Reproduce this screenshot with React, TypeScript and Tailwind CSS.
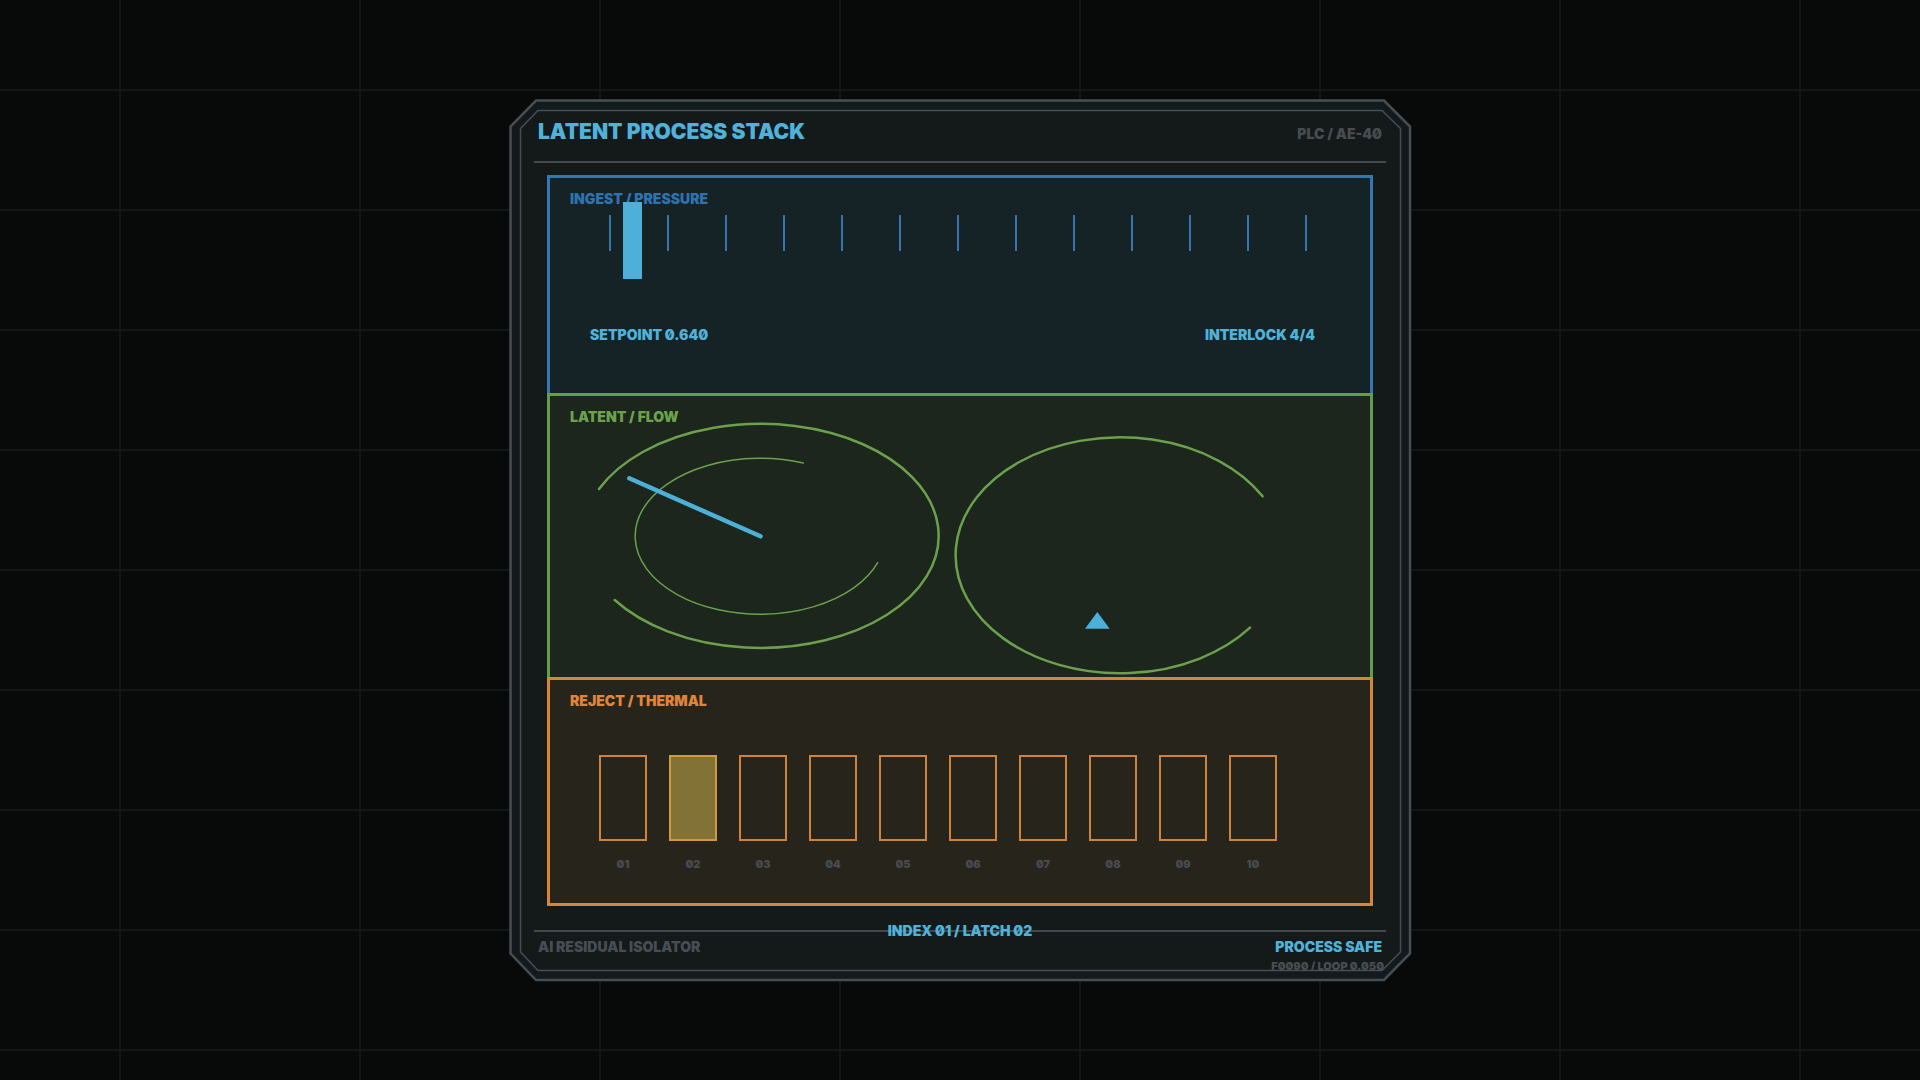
const TICKS = Array.from({ length: 13 }, (_, i) => i);
const CELLS = ["01", "02", "03", "04", "05", "06", "07", "08", "09", "10"];
const ACTIVE_CELL = "02";

const LABEL = "text-[14px] leading-5 font-black whitespace-nowrap";

function Frame() {
  return (
    <svg
      aria-hidden="true"
      className="pointer-events-none absolute inset-0 h-full w-full"
      viewBox="0 0 904 884"
      fill="none"
    >
      <path d="M28 2.5H876L902 28.5V855.5L876 882H28L2.5 855.5V28.5Z" fill="#121a1d" stroke="#484d53" strokeWidth="2.5" />
      <path d="M30 12.5H874L892.5 30.5V854L874 872.5H30L12.5 854V30.5Z" fill="#141919" stroke="#4a4e53" strokeWidth="1.5" />
    </svg>
  );
}

function IngestBand() {
  return (
    <section className="relative h-[218px] border-3 border-b-0 border-[#3278b0] bg-[#152226] pt-[11px]">
      <h2 className={`${LABEL} pl-5 text-[#2f72b0]`}>INGEST / PRESSURE</h2>
      <div className="absolute top-6 left-[73px] h-[77px] w-[19px] bg-[#4cb0d8]" />
      <div className="mt-[6px] flex h-9 justify-between pr-[63px] pl-[59px]">
        {TICKS.map((t) => (
          <span key={t} className="w-[2px] bg-[#3477ac]" />
        ))}
      </div>
      <div className="mt-[74px] flex justify-between pr-[55px] pl-10">
        <span className={`${LABEL} text-[#4fb2da]`}>SETPOINT 0.640</span>
        <span className={`${LABEL} text-[#4fb2da]`}>INTERLOCK 4/4</span>
      </div>
    </section>
  );
}

function LatentBand() {
  return (
    <section className="relative h-[284px] border-3 border-b-0 border-[#659d50] bg-[#1c261d] pt-[11px]">
      <svg aria-hidden="true" className="absolute inset-0 h-full w-full" viewBox="0 0 820 281" fill="none">
        <g stroke="#6ba04c" strokeLinecap="round" strokeWidth="2.5">
          <path d="M49 93A178 112 0 1 1 64.7 204" />
          <path d="M253.3 67A125 78 0 1 0 327.7 166.7" strokeWidth="1.5" />
          <path d="M712.6 100.3A164.5 118 0 1 0 700 231.7" />
        </g>
        <path d="M79.3 82.3L210.5 140.3" stroke="#4cb0d8" strokeWidth="4.5" strokeLinecap="round" />
        <path d="M547.3 216L559.7 232.7H535Z" fill="#4cb0d8" />
      </svg>
      <h2 className={`${LABEL} relative pl-5 text-[#6aa34c]`}>LATENT / FLOW</h2>
    </section>
  );
}

function RejectBand() {
  return (
    <section className="h-[229px] border-3 border-[#d78538] bg-[#27241c] pt-[11px]">
      <h2 className={`${LABEL} pl-5 text-[#e0853a]`}>REJECT / THERMAL</h2>
      <ul className="mt-11 flex justify-between pr-[93px] pl-[49px]">
        {CELLS.map((c) => (
          <li key={c} className="flex w-12 flex-col items-center gap-[15px]">
            <span
              className={
                c === ACTIVE_CELL
                  ? "h-[86px] w-full border-2 border-[#cf9a42] bg-[#837236]"
                  : "h-[86px] w-full border-2 border-[#cf8239]"
              }
            />
            <span className="text-[11px] leading-4 font-black text-[#484b4f]">{c}</span>
          </li>
        ))}
      </ul>
    </section>
  );
}

export default function App() {
  return (
    <main className="flex min-h-screen items-center justify-center bg-[#070a09] bg-[linear-gradient(to_right,#121615_2px,transparent_2px),linear-gradient(to_bottom,#121615_2px,transparent_2px)] bg-[length:240px_120px] bg-[position:119px_89px] font-['Inter',sans-serif] [font-feature-settings:'zero']">
      <article className="relative h-[884px] w-[904px]">
        <Frame />
        <div className="relative flex h-full flex-col px-[26px] pt-[21px]">
          <header className="flex h-[44px] justify-between border-b-2 border-[#44494d] px-1">
            <h1 className="text-[21px] leading-[26px] font-black text-[#4fb2da]">LATENT PROCESS STACK</h1>
            <span className={`${LABEL} mt-[5px] text-[#484c51]`}>PLC / AE-40</span>
          </header>
          <div className="mx-[13px] mt-3">
            <IngestBand />
            <LatentBand />
            <RejectBand />
          </div>
          <footer className="relative mt-6 border-t-2 border-[#43484d] px-1">
            <span className={`${LABEL} absolute inset-x-0 -top-[11px] text-center text-[#4fb2da]`}>
              INDEX 01 / LATCH 02
            </span>
            <div className="flex justify-between pt-[5px]">
              <span className={`${LABEL} text-[#484d54]`}>AI RESIDUAL ISOLATOR</span>
              <span className={`${LABEL} text-[#4fb2da]`}>PROCESS SAFE</span>
            </div>
            <p className="-mr-[2px] pt-px text-right text-[11px] leading-4 font-black text-[#484d54]">
              F0090 / LOOP 0.050
            </p>
          </footer>
        </div>
      </article>
    </main>
  );
}
